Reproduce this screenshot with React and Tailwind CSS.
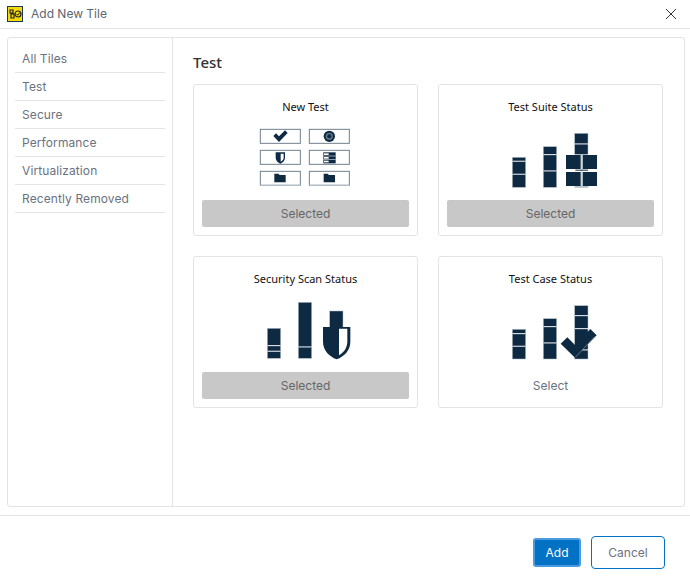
const navItems = ['All Tiles', 'Test', 'Secure', 'Performance', 'Virtualization', 'Recently Removed']

const navy = '#0d2a42'
const seam = '#b4c0c9'

// bar with light separators, coords are in the 3x viewBox
function Bar({ x, top, bottom = 277, w = 40, seps = [] }) {
  return (
    <g>
      <rect x={x} y={top} width={w} height={bottom - top} fill={navy} stroke={seam} strokeWidth="1.5" />
      {seps.map((y) => (
        <rect key={y} x={x} y={y} width={w} height="3.5" fill="#d5dce1" />
      ))}
    </g>
  )
}

function FolderGlyph({ x, y }) {
  return <path d={`M${x} ${y}h12l4 4h18v22h-34z`} fill={navy} />
}

function NewTestIcon() {
  const boxes = [
    [61, 13], [208, 13],
    [61, 76], [208, 76],
    [61, 139], [208, 139],
  ]
  return (
    <svg width="130" height="70" viewBox="0 0 390 210">
      {boxes.map(([x, y]) => (
        <rect key={`${x}-${y}`} x={x} y={y} width="120" height="42" fill="#fff" stroke="#6f808d" strokeWidth="3" />
      ))}
      <rect x="61" y="179" width="120" height="4" fill="#b4c0c9" />
      <rect x="208" y="179" width="120" height="4" fill="#b4c0c9" />
      <path d="M100 33l8-8 9 9 18-18 8 8-26 27z" fill={navy} />
      <circle cx="268" cy="34" r="17" fill={navy} />
      <circle cx="268" cy="34" r="11" fill="#5d7283" />
      <circle cx="268" cy="34" r="6" fill={navy} />
      <path d="M107 82h28v16c0 9-7 15-14 18-7-3-14-9-14-18z" fill={navy} />
      <path d="M122 86h9v12c0 5-4 9-9 12z" fill="#fff" />
      <rect x="250" y="82" width="37" height="33" fill={navy} />
      <rect x="250" y="92" width="37" height="2" fill="#d5dce1" />
      <rect x="250" y="103" width="37" height="2" fill="#d5dce1" />
      <rect x="252" y="85" width="14" height="5" fill="#fff" />
      <rect x="252" y="96" width="14" height="5" fill="#fff" />
      <rect x="252" y="107" width="14" height="5" fill="#fff" />
      <FolderGlyph x={103} y={146} />
      <FolderGlyph x={251} y={146} />
    </svg>
  )
}

function SuiteIcon() {
  return (
    <svg width="130" height="70" viewBox="0 0 390 210">
      <g transform="translate(15,-90)">
        <Bar x={67} top={187} seps={[197, 236]} />
        <Bar x={160} top={155} seps={[177, 226]} />
        <Bar x={254} top={115} seps={[145]} />
        <rect x="226" y="178" width="97" height="99" fill="#fff" />
        <rect x="254" y="272" width="41" height="5" fill={seam} />
        <rect x="228" y="180" width="44" height="42" fill={navy} />
        <rect x="278" y="180" width="43" height="42" fill={navy} />
        <rect x="228" y="231" width="44" height="42" fill={navy} />
        <rect x="278" y="231" width="43" height="42" fill={navy} />
        <rect x="274" y="178" width="2.5" height="99" fill={seam} />
        <rect x="256" y="224" width="38" height="3" fill={navy} />
      </g>
    </svg>
  )
}

function SecurityIcon() {
  return (
    <svg width="130" height="70" viewBox="0 0 390 210">
      <g transform="translate(15,-6)">
        <Bar x={67} top={100} bottom={190} seps={[150, 167]} />
        <Bar x={160} top={22} bottom={190} seps={[154]} />
        <Bar x={254} top={48} bottom={100} />
        <path d="M234 96h82v44c0 26-18 44-41 53-23-9-41-27-41-53z" fill={navy} />
        <path d="M282 101h25v38c0 20-10 33-25 42z" fill="#fff" />
      </g>
    </svg>
  )
}

function CaseIcon() {
  return (
    <svg width="130" height="70" viewBox="0 0 390 210">
      <g transform="translate(15,-6)">
        <Bar x={67} top={103} bottom={192} seps={[114, 152]} />
        <Bar x={160} top={71} bottom={192} seps={[93, 142]} />
        <Bar x={254} top={32} bottom={192} seps={[60, 99, 163]} />
        <path d="M212 146l20-19 23 23 46-48 19 19-65 67z" fill={navy} />
        <path d="M256 187l58-62" stroke={seam} strokeWidth="1.5" fill="none" />
      </g>
    </svg>
  )
}

const tiles = [
  { title: 'New Test', icon: <NewTestIcon />, selected: true },
  { title: 'Test Suite Status', icon: <SuiteIcon />, selected: true },
  { title: 'Security Scan Status', icon: <SecurityIcon />, selected: true },
  { title: 'Test Case Status', icon: <CaseIcon />, selected: false },
]

export default function App() {
  return (
    <div className="w-[690px] h-[587px] flex flex-col bg-white font-['Inter',sans-serif] text-[12px] text-[#6b7280] overflow-hidden">
      <div className="h-[29px] shrink-0 flex items-center pl-[7px] pr-[13px] border-b border-[#e3e3e3]">
        <svg width="16" height="16" viewBox="0 0 16 16" className="mb-[1px]">
          <rect x="0.5" y="0.5" width="15" height="15" fill="#f5d90a" stroke="#1d3b4f" />
          <path d="M3 4h3v3h-3zM4 8h3v4h-3z" fill="none" stroke="#222" strokeWidth="1.2" />
          <circle cx="11" cy="8" r="3" fill="none" stroke="#222" strokeWidth="1.2" />
          <path d="M9.5 8l1.2 1.2 2.5-3" fill="none" stroke="#222" strokeWidth="1" />
        </svg>
        <span className="ml-[8px] text-[#5b6670]">Add New Tile</span>
        <svg width="12" height="12" viewBox="0 0 12 12" className="ml-auto mb-[1px]">
          <path d="M1 1l10 10M11 1l-10 10" stroke="#333" strokeWidth="1" fill="none" />
        </svg>
      </div>

      <div className="pt-[8px] pl-[7px] pr-[5px]">
        <div className="h-[470px] flex border border-[#e3e3e3] rounded-[3px]">
          <div className="w-[165px] shrink-0 border-r border-[#e3e3e3] pt-[7px] px-[7px]">
            {navItems.map((item) => (
              <div key={item} className="h-[28px] flex items-center pl-[7px] border-b border-[#e3e3e3] tracking-[0.1px]">
                {item}
              </div>
            ))}
          </div>
          <div className="flex-1 pl-[20px] pt-[15px]">
            <h2 className="h-[18px] leading-[18px] mb-[13px] text-[15px] font-medium text-[#333] font-['Noto_Sans',sans-serif]">Test</h2>
            <div className="grid grid-cols-[225px_225px] auto-rows-[152px] gap-[20px]">
              {tiles.map((tile) => (
                <div key={tile.title} className="border border-[#e3e3e3] rounded-[3px] flex flex-col items-center px-[8px] pt-[13px]">
                  <div className="h-[18px] leading-[18px] text-[11px] text-[#111] font-['Noto_Sans',sans-serif]">{tile.title}</div>
                  <div className="h-[70px] mt-[9px] w-[130px] -ml-[1px]">{tile.icon}</div>
                  <div className={`mt-[5px] w-full h-[27px] rounded-[2px] flex items-center justify-center ${tile.selected ? 'bg-[#c8c8c8] text-[#666]' : 'text-[#6b7280]'}`}>
                    {tile.selected ? 'Selected' : 'Select'}
                  </div>
                </div>
              ))}
            </div>
          </div>
        </div>
      </div>

      <div className="mt-[8px] flex-1 border-t border-[#e3e3e3] flex items-start justify-end gap-[10px] pt-[20px] pr-[25px]">
        <button className="mt-[2px] w-[48px] h-[29px] bg-[#0472c4] border-2 border-[#4a9be0] rounded-[3px] text-white text-[12px]">Add</button>
        <button className="w-[74px] h-[33px] bg-white border border-[#0472c4] rounded-[4px] text-[#6b7280] text-[12px]">Cancel</button>
      </div>
    </div>
  )
}
